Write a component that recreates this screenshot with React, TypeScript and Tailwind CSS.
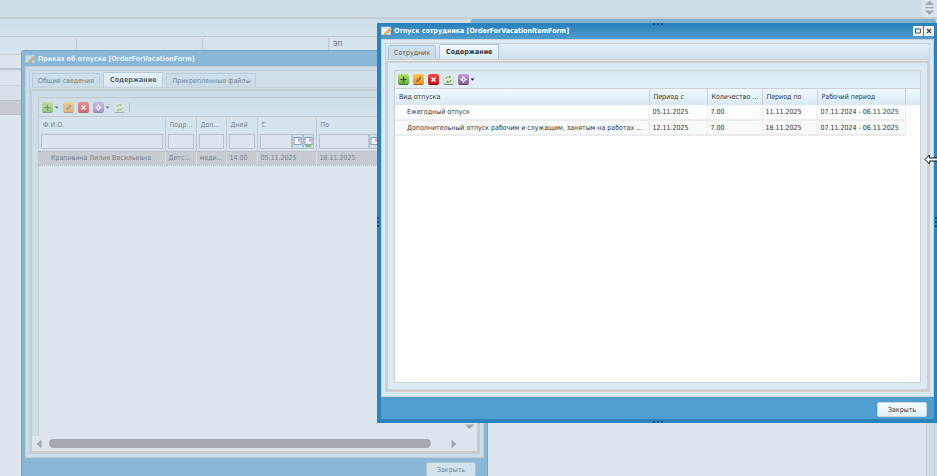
import type { ReactNode } from "react";
import clsx from "clsx";

const ICONS: Record<string, { from: string; to: string; ink: ReactNode }> = {
  add: {
    from: "#b5e36a",
    to: "#5da831",
    ink: <path d="M5.5 2.5v6M2.5 5.5h6" stroke="#2f4f2b" strokeWidth="1.2" />,
  },
  edit: {
    from: "#ffc84a",
    to: "#f08a1c",
    ink: (
      <>
        <path d="M3 7.8 4.2 4.6 6.8 2.8 8.4 3.2 7 6 4.4 7.8Z" fill="#7b5a38" />
        <path d="M4.2 6 6.8 3.6" stroke="#efe6d8" strokeWidth="0.9" />
      </>
    ),
  },
  remove: {
    from: "#fa4a40",
    to: "#c80f14",
    ink: <path d="m3.5 3.5 4 4M7.5 3.5l-4 4" stroke="#fff" strokeWidth="1.6" />,
  },
  refresh: {
    from: "#e2e5e0",
    to: "#bfc4c0",
    ink: (
      <>
        <rect x="1" y="1" width="9" height="8.5" rx="1" fill="#e6ebe2" />
        <path d="M2.8 5Q3 3 5.2 3h1.6M8.2 5.8Q8 7.8 5.8 7.8H4.2" stroke="#5fb53a" strokeWidth="1.2" fill="none" />
        <path d="M6.2 1.4 8.4 3 6.2 4.6ZM4.8 6.2 2.6 7.8l2.2 1.6Z" fill="#5fb53a" />
      </>
    ),
  },
  gear: {
    from: "#c79ad0",
    to: "#85559b",
    ink: (
      <>
        <path d="M5.5 1.8 6.9 4.1 9.2 5.5 6.9 6.9 5.5 9.2 4.1 6.9 1.8 5.5 4.1 4.1Z" fill="#f6eef8" />
        <circle cx="5.5" cy="5.5" r="0.9" fill="#a77bb6" />
      </>
    ),
  },
};

function ToolButton({ icon, label, menu }: { icon: string; label: string; menu?: boolean }) {
  const { from, to, ink } = ICONS[icon];
  return (
    <button aria-label={label} className="flex items-center gap-px">
      <svg width="11" height="11" viewBox="0 0 11 11">
        <defs>
          <linearGradient id={`tb-${icon}`} x1="0" y1="0" x2="0" y2="1">
            <stop offset="0" stopColor={from} />
            <stop offset="1" stopColor={to} />
          </linearGradient>
        </defs>
        <rect width="11" height="11" rx="2" fill={`url(#tb-${icon})`} />
        <path d="M1 10.5h9" stroke="#000" strokeOpacity="0.3" />
        {ink}
      </svg>
      {menu && (
        <svg width="5" height="3" viewBox="0 0 5 3">
          <path d="M0.5 0.5h4L2.5 2.6Z" fill="#111" />
        </svg>
      )}
    </button>
  );
}

function FormIcon() {
  return (
    <svg width="11" height="10" viewBox="0 0 11 10" className="shrink-0">
      <rect x="0.5" y="1" width="9" height="7.5" fill="#f4f7fa" stroke="#c6d6e2" strokeWidth="0.6" />
      <path d="M0.5 1h9v1.4h-9Z" fill="#d3e3ef" />
      <path d="m3.2 9.2.6-2.4L8.4 2.4l1.8 1.8-4.6 4.4Z" fill="#f0b64a" stroke="#b98a3c" strokeWidth="0.4" />
      <path d="m8.4 2.4 1-.9 1.7 1.7-.9 1Z" fill="#e0b09a" />
    </svg>
  );
}

function CalendarIcon({ clear }: { clear?: boolean }) {
  return (
    <svg width="11" height="15" viewBox="0 0 11 15" className="shrink-0">
      <rect x="0.5" y="0.5" width="10" height="14" fill="#cfe0ea" stroke="#b5c0c8" />
      <rect x="2" y="3.5" width="7" height="7" fill="#eef3f8" stroke="#7fa3c4" />
      <rect x="6" y="4.5" width="2" height="3" fill="#dba3a8" />
      {clear && <path d="M2 11.5 4.6 9v1.2H8v2.8H4.6v1.2Z" fill="#84b984" />}
    </svg>
  );
}

function Tab({ children, active }: { children: ReactNode; active?: boolean }) {
  return (
    <button
      role="tab"
      aria-selected={!!active}
      className={clsx(
        "rounded-t-[2px] border border-b-0 whitespace-nowrap",
        active
          ? "h-[15px] border-[#a9c6d8] bg-gradient-to-b from-[#f2fbff] to-[#d9eaf3] px-[6px] font-bold text-[#333]"
          : "h-[14px] border-[#adc4d4] bg-gradient-to-b from-[#cfe2ee] to-[#c6dae7] px-[5px] text-[#555]"
      )}
    >
      {children}
    </button>
  );
}

function Grip({ className }: { className: string }) {
  return <span className={clsx("absolute border-dotted border-[#0b4f86]", className)} />;
}

const PERIOD_HEADERS = ["Вид отпуска", "Период с", "Количество ...", "Период по", "Рабочий период"];

const PERIODS = [
  ["Ежегодный отпуск", "05.11.2025", "7.00", "11.11.2025", "07.11.2024 - 06.11.2025"],
  [
    "Дополнительный отпуск рабочим и служащим, занятым на работах ...",
    "12.11.2025",
    "7.00",
    "18.11.2025",
    "07.11.2024 - 06.11.2025",
  ],
];

const ORDER_HEADERS = ["Ф.И.О.", "Подр...", "Дол...", "Дней", "С", "По"];

const ORDER_ROW = ["Крапивина Лилия Васильевна", "Детс...", "меди...", "14.00", "05.11.2025", "18.11.2025"];

function BackPage() {
  return (
    <main className="flex min-h-screen flex-col bg-[#dde5ec]">
      <div className="flex h-[19px] justify-end border-b-2 border-[#c5cdd3] bg-[#ccdde7]">
        <div className="flex w-[15px] flex-col items-center bg-[#dde5ec]">
          <svg width="11" height="16" viewBox="0 0 11 16">
            <path d="M1 5 5.5 0.5 10 5ZM1 10.5 5.5 15 10 10.5ZM1 7h9v1.2H1Z" fill="#a4a9b0" />
          </svg>
        </div>
      </div>
      <div className="h-[18px] border-b border-[#c2cad0] bg-gradient-to-b from-[#ccdde7] to-[#d2e3ed]" />
      <div className="flex h-[18px] border-b border-[#c2cad0] bg-[#d5e4ec] pt-px text-[#666]">
        <span className="w-[77px] border-r border-[#c2cad0]" />
        <span className="w-[126px] border-r border-[#c2cad0]" />
        <span className="w-[126px] border-r border-[#c2cad0]" />
        <span className="px-1 leading-[13px]">ЭП</span>
      </div>
      <div className="h-[15px] border-b-2 border-[#bcc6d2]" />
      <div className="h-[16px] border-b border-[#ced4da]" />
      <div className="h-[14px] bg-[#d8dfe6]" />
      <div className="h-[15px] border-y border-dotted border-[#b4babf] bg-[#c6ccd2]" />
      <div className="flex flex-1 justify-end">
        <div className="w-[11px] border-l border-[#c5cdd3] bg-[#ccdde7]">
          <div className="ml-[7px] h-full border-l border-[#c5cdd3]" />
        </div>
      </div>
    </main>
  );
}

function OrderWindow() {
  return (
    <section className="absolute top-[50px] left-[21px] flex h-[440px] w-[467px] flex-col rounded-t-[3px] border border-[#74a5c6] bg-[#8ab7d5] px-[3px] text-[#77828a]">
      <header className="flex h-[15px] items-center gap-[2px] font-bold text-[#e8f1f7]">
        <span className="opacity-60">
          <FormIcon />
        </span>
        <h2>Приказ об отпуске [OrderForVacationForm]</h2>
      </header>
      <div className="flex h-[392px] flex-col border border-[#c5cdd3] bg-[#ccdde7] p-[3px]">
        <div className="flex h-full flex-col border border-[#c5cdd3]">
          <div className="flex h-[17px] items-end gap-[3px] border-b border-[#c5cdd3] bg-[#cfe0ea] pl-[2px] opacity-70" role="tablist">
            <Tab>Общие сведения</Tab>
            <Tab active>Содержание</Tab>
            <Tab>Прикрепленные файлы</Tab>
          </div>
          <div className="mt-px flex flex-1 flex-col border-2 border-[#c5cdd3] pt-[6px]">
            <div className="ml-[6px] flex flex-1 flex-col border-t border-l border-[#c2cad0] bg-[#dde5ec]">
              <div className="flex h-[19px] shrink-0 items-center gap-1 border-b border-[#c2cad0] bg-gradient-to-b from-[#ccdde7] to-[#d2e3ed] pl-[3px]">
                <div className="flex items-center gap-1 opacity-55">
                  <ToolButton icon="add" label="Добавить" menu />
                  <ToolButton icon="edit" label="Изменить" />
                  <ToolButton icon="remove" label="Удалить" />
                  <ToolButton icon="gear" label="Действия" menu />
                  <ToolButton icon="refresh" label="Обновить" />
                </div>
                <span className="h-[9px] w-px bg-[#b8c4cc]" />
              </div>
              <table className="w-full table-fixed border-collapse whitespace-nowrap">
                <colgroup>
                  <col className="w-[126px]" />
                  <col className="w-[31px]" />
                  <col className="w-[30px]" />
                  <col className="w-[31px]" />
                  <col className="w-[59px]" />
                  <col />
                </colgroup>
                <thead className="bg-[#d5e4ec]">
                  <tr className="h-[16px]">
                    {ORDER_HEADERS.map((h) => (
                      <th key={h} className="border-r border-[#c2cad0] py-0 pr-0 pl-1 text-left font-normal">
                        {h}
                      </th>
                    ))}
                  </tr>
                  <tr className="h-[18px]">
                    {ORDER_HEADERS.map((h, i) => (
                      <th key={h} className="border-r border-[#c2cad0] px-[2px] py-0 font-normal">
                        <div className="flex">
                          <input
                            aria-label={h}
                            className={clsx(
                              "h-[15px] min-w-0 border border-[#b9c2c9] bg-[#dde5ec]",
                              i === 5 ? "w-[50px]" : "flex-1"
                            )}
                          />
                          {i > 3 && (
                            <>
                              <CalendarIcon />
                              <CalendarIcon clear />
                            </>
                          )}
                        </div>
                      </th>
                    ))}
                  </tr>
                </thead>
                <tbody>
                  <tr className="h-[14px] border-y border-dotted border-[#aeb5bb] bg-[#c6ccd2]">
                    {ORDER_ROW.map((value, i) => (
                      <td
                        key={i}
                        className={clsx("border-r border-r-[#d6dbe0] py-0 pr-0", i === 0 ? "pl-3" : "pl-[3px]")}
                      >
                        {value}
                      </td>
                    ))}
                  </tr>
                </tbody>
              </table>
              <svg width="11" height="40" viewBox="0 0 11 40" className="mt-auto mr-[2px] mb-[2px] ml-auto">
                <rect x="1" y="0" width="9" height="10" rx="4" fill="#a4a9b0" />
                <path d="M1 30.5h9.5L5.5 35Z" fill="#a4a9b0" />
              </svg>
            </div>
            <div className="flex h-[15px] items-center bg-[#dde5ec] px-1">
              <svg width="6" height="10" viewBox="0 0 6 10">
                <path d="M5.5 0.5v9L0.5 5Z" fill="#a4a9b0" />
              </svg>
              <div className="mr-5 ml-[7px] h-[9px] flex-1 rounded-full bg-[#a4a9b0]" />
              <svg width="6" height="10" viewBox="0 0 6 10" className="mr-4">
                <path d="M0.5 0.5v9l5-4.5Z" fill="#a4a9b0" />
              </svg>
            </div>
          </div>
        </div>
      </div>
      <footer className="flex justify-end px-2 pt-1">
        <button className="h-[15px] w-[50px] rounded-[2px] border border-[#b2c3cd] bg-[#d1e2ea]">Закрыть</button>
      </footer>
    </section>
  );
}

function ItemWindow() {
  return (
    <section className="absolute top-[23px] right-0 left-[377px] flex h-[400px] flex-col border-4 border-t-2 border-r-[3px] border-[#2b82bd] bg-[#509dcf] text-[#333]">
      <Grip className="-top-[2px] left-[272px] w-[10px] border-t-2" />
      <Grip className="-bottom-1 left-[272px] w-[10px] border-t-2" />
      <Grip className="top-[192px] -left-1 h-[10px] border-l-2" />
      <Grip className="top-[192px] -right-[3px] h-[10px] border-l-2" />
      <header className="flex h-[14px] shrink-0 items-center gap-[2px] bg-gradient-to-b from-[#2b82bd] to-[#509dcf] pb-[2px] font-bold text-white">
        <FormIcon />
        <h1 className="flex-1">Отпуск сотрудника [OrderForVacationItemForm]</h1>
        <div className="flex gap-px">
          <button aria-label="Развернуть">
            <svg width="10" height="10" viewBox="0 0 10 10">
              <rect width="10" height="10" rx="1" fill="#eef2f4" />
              <path d="M2.5 3v4h5V3M2 3h6" fill="none" stroke="#555" />
            </svg>
          </button>
          <button aria-label="Закрыть окно">
            <svg width="10" height="10" viewBox="0 0 10 10">
              <rect width="10" height="10" rx="1" fill="#eef2f4" />
              <path d="m3 3 4 4M7 3 3 7" stroke="#444" strokeWidth="1.3" />
            </svg>
          </button>
        </div>
      </header>
      <div className="flex flex-1 flex-col border border-[#cfcfcf] bg-[#daeaf4] p-[3px] pb-1">
        <div className="flex flex-1 flex-col border border-[#cfcfcf]">
          <div className="flex h-[16px] items-end gap-[3px] border-b border-[#cfcfcf] bg-gradient-to-b from-[#e2f0fa] to-[#cfdfe9] pl-[2px]" role="tablist">
            <Tab>Сотрудник</Tab>
            <Tab active>Содержание</Tab>
          </div>
          <div className="mt-px flex flex-1 flex-col border-2 border-[#cfcfcf] p-[6px] pt-[7px]">
            <div className="flex-1 border border-[#cfcfcf] bg-[#fcfdff]">
              <div className="flex h-[18px] items-center gap-1 border-b border-[#cfcfcf] bg-gradient-to-b from-[#d7e8f3] to-[#e0f1fc] pl-[3px]">
                <ToolButton icon="add" label="Добавить" />
                <ToolButton icon="edit" label="Изменить" />
                <ToolButton icon="remove" label="Удалить" />
                <ToolButton icon="refresh" label="Обновить" />
                <ToolButton icon="gear" label="Действия" menu />
              </div>
              <table className="w-full table-fixed border-collapse whitespace-nowrap">
                <colgroup>
                  <col />
                  <col className="w-[58px]" />
                  <col className="w-[55px]" />
                  <col className="w-[55px]" />
                  <col className="w-[88px]" />
                  <col className="w-[15px]" />
                </colgroup>
                <thead>
                  <tr className="h-[16px] bg-gradient-to-b from-[#eefaff] to-[#d8e8f2]">
                    {PERIOD_HEADERS.map((h) => (
                      <th key={h} className="border-r border-[#cfcfcf] py-0 pr-0 pl-1 text-left font-normal">
                        {h}
                      </th>
                    ))}
                    <th />
                  </tr>
                </thead>
                <tbody>
                  {PERIODS.map((row, i) => (
                    <tr key={i} className={clsx("h-[15px]", i === 1 && "bg-[#f8f9fa]")}>
                      {row.map((value, j) => (
                        <td
                          key={j}
                          className={clsx(
                            "border-r border-b-2 border-[#ececec] py-0 pr-0",
                            j === 0 ? "pl-3" : "pl-[3px]"
                          )}
                        >
                          {value}
                        </td>
                      ))}
                      <td className="bg-[#fcfdff]" />
                    </tr>
                  ))}
                </tbody>
              </table>
            </div>
          </div>
        </div>
      </div>
      <footer className="flex shrink-0 justify-end px-[7px] pt-[5px] pb-[2px]">
        <button className="h-[15px] w-[50px] rounded-[2px] border border-[#c9d6dd] bg-gradient-to-b from-[#f3fdff] to-[#dff0fa]">
          Закрыть
        </button>
      </footer>
    </section>
  );
}

export default function App() {
  return (
    <div className="relative h-screen overflow-hidden font-['DejaVu_Sans_Condensed','DejaVu_Sans',sans-serif] text-[7px] leading-[10px]">
      <BackPage />
      {/* top edge of the window stacked behind the item form */}
      <div className="absolute top-[19px] right-px left-[471px] h-5 rounded-t-[2px] bg-[#80b0d0]" />
      <OrderWindow />
      <ItemWindow />
      {/* resize cursor */}
      <svg width="13" height="11" viewBox="0 0 13 11" className="absolute top-[154px] right-0">
        <path d="M1 5.5 5.5 1v3H14v3H5.5v3Z" fill="#fff" stroke="#111" strokeWidth="1" />
      </svg>
    </div>
  );
}
